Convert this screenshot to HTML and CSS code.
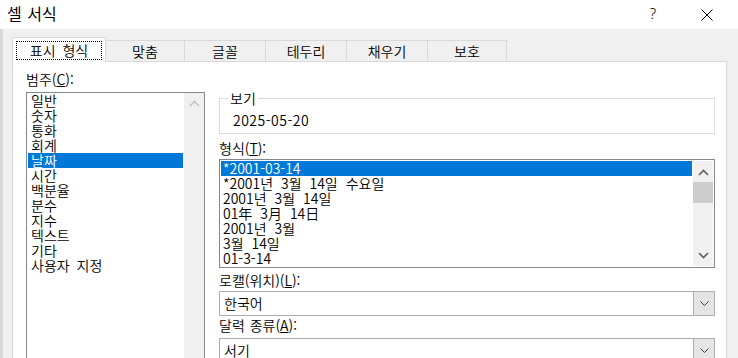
FILE: index.html
```html
<!DOCTYPE html>
<html lang="ko">
<head>
<meta charset="utf-8">
<title>셀 서식</title>
<link rel="stylesheet" href="styles.css">
</head>
<body>
<div class="window">
  <header class="titlebar">
    <span class="title">셀 서식</span>
    <span class="help">?</span>
    <span class="close"><svg width="12" height="12" viewBox="0 0 12 12"><path d="M0.5 0.5 L11.5 11.5 M11.5 0.5 L0.5 11.5" stroke="#000" stroke-width="1" fill="none"/></svg></span>
  </header>
  <div class="client">
    <nav class="tabs">
      <div class="tab active"><span class="focus">표시 형식</span></div>
      <div class="tab w79">맞춤</div>
      <div class="tab">글꼴</div>
      <div class="tab">테두리</div>
      <div class="tab">채우기</div>
      <div class="tab w79">보호</div>
    </nav>
    <section class="panel">
      <div class="col-left">
        <div class="label">범주(<u>C</u>):</div>
        <div class="listbox cat">
          <ul class="items">
            <li>일반</li>
            <li>숫자</li>
            <li>통화</li>
            <li>회계</li>
            <li class="sel">날짜</li>
            <li>시간</li>
            <li>백분율</li>
            <li>분수</li>
            <li>지수</li>
            <li>텍스트</li>
            <li>기타</li>
            <li>사용자 지정</li>
          </ul>
          <div class="vscroll">
            <svg class="arrow" width="11" height="7" viewBox="0 0 11 7"><path d="M1 6 L5.5 1.5 L10 6" stroke="#c2c2c2" stroke-width="1.6" fill="none"/></svg>
          </div>
        </div>
      </div>
      <div class="col-right">
        <fieldset class="sample">
          <legend>보기</legend>
          <div class="sample-value">2025-05-20</div>
        </fieldset>
        <div class="label gap-t">형식(<u>T</u>):</div>
        <div class="listbox fmt">
          <ul class="items">
            <li class="sel">*2001-03-14</li>
            <li>*2001년 3월 14일 수요일</li>
            <li>2001년 3월 14일</li>
            <li>01年 3月 14日</li>
            <li>2001년 3월</li>
            <li>3월 14일</li>
            <li>01-3-14</li>
          </ul>
          <div class="vscroll">
            <svg class="arrow" width="11" height="7" viewBox="0 0 11 7"><path d="M1 6 L5.5 1.5 L10 6" stroke="#606060" stroke-width="1.6" fill="none"/></svg>
            <div class="thumb"></div>
            <div class="track"></div>
            <svg class="arrow" width="11" height="7" viewBox="0 0 11 7"><path d="M1 1 L5.5 5.5 L10 1" stroke="#606060" stroke-width="1.6" fill="none"/></svg>
          </div>
        </div>
        <div class="label gap-l">로캘(위치)(<u>L</u>):</div>
        <div class="combo">
          <span class="combo-text">한국어</span>
          <span class="drop"><svg width="9" height="5" viewBox="0 0 9 5"><path d="M0.5 0.5 L4.5 4.5 L8.5 0.5" stroke="#404040" stroke-width="1" fill="none"/></svg></span>
        </div>
        <div class="label gap-c">달력 종류(<u>A</u>):</div>
        <div class="combo">
          <span class="combo-text">서기</span>
          <span class="drop"><svg width="9" height="5" viewBox="0 0 9 5"><path d="M0.5 0.5 L4.5 4.5 L8.5 0.5" stroke="#404040" stroke-width="1" fill="none"/></svg></span>
        </div>
      </div>
    </section>
  </div>
</div>
</body>
</html>
```

FILE: styles.css
```css
* { box-sizing: border-box; }

html, body {
  margin: 0;
  padding: 0;
  background: #f0f0f0;
  overflow: hidden;
}

body {
  font-family: "Noto Sans CJK KR", "Noto Sans", sans-serif;
  font-size: 14px;
  font-weight: 350;
  word-spacing: 3px;
  color: #000;
}

.window {
  width: 738px;
  height: 358px;
  display: flex;
  flex-direction: column;
  overflow: hidden;
}

/* title bar */
.titlebar {
  height: 29px;
  flex: none;
  background: #fff;
  display: flex;
  align-items: center;
  padding: 0 25px 3px 7px;
}

.title {
  font-size: 16px;
  font-weight: 400;
  word-spacing: 1px;
  line-height: 20px;
}

.help {
  margin-left: auto;
  font-size: 15px;
  line-height: 20px;
  font-family: "Noto Sans", sans-serif;
}

.close {
  margin-left: 45px;
  margin-top: 3px;
  display: flex;
  width: 12px;
  height: 12px;
}

/* client area */
.client {
  flex: 1;
  padding: 8px 0 0 12px;
  background: linear-gradient(to right, #d8d8d8 0, #d8d8d8 3px, #f0f0f0 3px);
  display: flex;
  flex-direction: column;
}

.tabs {
  display: flex;
  align-items: flex-end;
  height: 24px;
  position: relative;
  z-index: 1;
}

.tab {
  width: 81px;
  height: 21px;
  border-top: 1px solid #d9d9d9;
  border-right: 1px solid #d9d9d9;
  background: #f0f0f0;
  display: flex;
  align-items: center;
  justify-content: center;
  line-height: 15px;
  padding-top: 1px;
}

.tab.w79 { width: 79px; }

.tab.active {
  width: 94px;
  height: 25px;
  margin-bottom: -1px;
  border-left: 1px solid #d9d9d9;
  background: #fff;
  padding-top: 0;
}

.focus {
  display: flex;
  align-items: center;
  justify-content: center;
  width: 86px;
  height: 19px;
  border: 1px dotted #000;
  margin-top: 1px;
}

/* panel */
.panel {
  flex: 1;
  width: 715px;
  background: #fff;
  border: 1px solid #d9d9d9;
  border-bottom: none;
  display: grid;
  grid-template-columns: 179px 496px;
  column-gap: 14px;
  align-items: start;
  padding: 10px 0 0 13px;
}

.label {
  line-height: 15px;
  height: 15px;
  white-space: nowrap;
  word-spacing: 1px;
}

.col-left .label { margin-bottom: 5px; }

/* list boxes */
.listbox {
  border: 1px solid #828790;
  background: #fff;
  display: flex;
}

.items {
  list-style: none;
  margin: 0;
  padding: 0 1px;
  flex: 1;
}

.items li {
  height: 15px;
  line-height: 15px;
  white-space: nowrap;
}

.items li.sel {
  background: #0078d7;
  color: #fff;
}

.cat { height: 290px; }
.cat .items li { padding-left: 3px; }

.fmt .items li { word-spacing: 4px; }

.vscroll {
  width: 20px;
  background: #f0f0f0;
  display: flex;
  flex-direction: column;
  align-items: center;
}

.arrow {
  flex: none;
  margin: 7px 0 6px;
}

.fmt {
  height: 109px;
  padding: 1px 1px 1px 0;
}

.fmt .items li { padding-left: 2px; }

.fmt .vscroll .arrow:first-child { margin: 8px 0 6px; }
.fmt .vscroll .arrow:last-child { margin: 6px 0 7px; }

.thumb {
  width: 100%;
  height: 21px;
  background: #cdcdcd;
  flex: none;
}

.track { flex: 1; }

/* group box */
.sample {
  margin: 19px 0 0;
  padding: 0 6px 5px;
  border: 1px solid #dcdcdc;
  min-width: 0;
}

.sample legend {
  padding: 0 2px;
  line-height: 15px;
  margin-left: 2px;
}

.sample-value {
  line-height: 15px;
  padding: 7px 0 0 7px;
  letter-spacing: 0.5px;
}

.gap-t { margin: 7px 0 3px; }
.gap-l { margin: 5px 0 3px; }
.gap-c { margin: 2px 0 5px; }

/* combo boxes */
.combo {
  height: 25px;
  border: 1px solid #adadad;
  background: #fff;
  display: flex;
  align-items: stretch;
}

.combo-text {
  flex: 1;
  padding-left: 4px;
  line-height: 23px;
}

.drop {
  width: 21px;
  background: #e5e5e5;
  border-left: 1px solid #adadad;
  display: flex;
  align-items: center;
  justify-content: center;
}
```
